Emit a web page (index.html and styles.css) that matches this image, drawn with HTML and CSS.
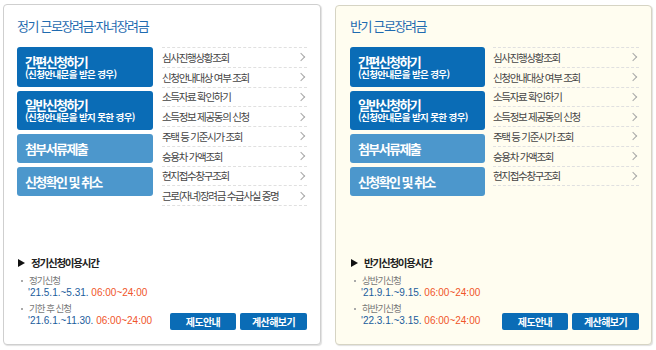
FILE: index.html
```html
<!DOCTYPE html>
<html lang="ko">
  <head>
    <meta charset="UTF-8" />
    <title>근로장려금 신청</title>
    <link rel="stylesheet" href="styles.css">
  </head>
  <body>
    <div class="wrap">
      <section class="panel">
        <h2 class="panel-title">정기 근로장려금·자녀장려금</h2>
        <div class="panel-body">
          <div class="apply-btns">
            <a href="#" class="apply-btn dark tall">
              <strong>간편신청하기</strong>
              <span>(신청안내문을 받은 경우)</span>
            </a>
            <a href="#" class="apply-btn dark tall">
              <strong>일반신청하기</strong>
              <span>(신청안내문을 받지 못한 경우)</span>
            </a>
            <a href="#" class="apply-btn light"><strong>첨부서류제출</strong></a>
            <a href="#" class="apply-btn light"><strong>신청확인 및 취소</strong></a>
          </div>
          <ul class="link-list">
            <li><a href="#">심사진행상황조회</a></li>
            <li><a href="#">신청안내대상 여부 조회</a></li>
            <li><a href="#">소득자료 확인하기</a></li>
            <li><a href="#">소득정보 제공동의 신청</a></li>
            <li><a href="#">주택 등 기준시가 조회</a></li>
            <li><a href="#">승용차 가액조회</a></li>
            <li><a href="#">현지접수창구조회</a></li>
            <li><a href="#">근로(자녀)장려금 수급사실 증명</a></li>
          </ul>
        </div>
        <div class="info">
          <div class="info-text">
            <h3 class="info-title">정기신청이용시간</h3>
            <dl class="info-item">
              <dt>정기신청</dt>
              <dd>'21.5.1.~5.31. <em>06:00~24:00</em></dd>
            </dl>
            <dl class="info-item">
              <dt>기한 후 신청</dt>
              <dd>'21.6.1.~11.30. <em>06:00~24:00</em></dd>
            </dl>
          </div>
          <div class="info-btns">
            <a href="#" class="small-btn">제도안내</a>
            <a href="#" class="small-btn">계산해보기</a>
          </div>
        </div>
      </section>

      <section class="panel panel-half">
        <h2 class="panel-title">반기 근로장려금</h2>
        <div class="panel-body">
          <div class="apply-btns">
            <a href="#" class="apply-btn dark tall">
              <strong>간편신청하기</strong>
              <span>(신청안내문을 받은 경우)</span>
            </a>
            <a href="#" class="apply-btn dark tall">
              <strong>일반신청하기</strong>
              <span>(신청안내문을 받지 못한 경우)</span>
            </a>
            <a href="#" class="apply-btn light"><strong>첨부서류제출</strong></a>
            <a href="#" class="apply-btn light"><strong>신청확인 및 취소</strong></a>
          </div>
          <ul class="link-list">
            <li><a href="#">심사진행상황조회</a></li>
            <li><a href="#">신청안내대상 여부 조회</a></li>
            <li><a href="#">소득자료 확인하기</a></li>
            <li><a href="#">소득정보 제공동의 신청</a></li>
            <li><a href="#">주택 등 기준시가 조회</a></li>
            <li><a href="#">승용차 가액조회</a></li>
            <li><a href="#">현지접수창구조회</a></li>
          </ul>
        </div>
        <div class="info">
          <div class="info-text">
            <h3 class="info-title">반기신청이용시간</h3>
            <dl class="info-item">
              <dt>상반기신청</dt>
              <dd>'21.9.1.~9.15. <em>06:00~24:00</em></dd>
            </dl>
            <dl class="info-item">
              <dt>하반기신청</dt>
              <dd>'22.3.1.~3.15. <em>06:00~24:00</em></dd>
            </dl>
          </div>
          <div class="info-btns">
            <a href="#" class="small-btn">제도안내</a>
            <a href="#" class="small-btn">계산해보기</a>
          </div>
        </div>
      </section>
    </div>
  </body>
</html>
```

FILE: styles.css
```css
* {
  margin: 0;
  padding: 0;
  box-sizing: border-box;
}

:root {
  --blue-dark: #0a6cb6;
  --blue-light: #4c97cc;
  --title-blue: #1f6bb0;
  --date-blue: #1b5c9c;
  --time-red: #f0552a;
  --text-color: #444;
}

body {
  font-family: "Noto Sans CJK KR", "Noto Sans", sans-serif;
  background: #fff;
  color: var(--text-color);
}

a {
  text-decoration: none;
  color: inherit;
}

ul {
  list-style: none;
}

.wrap {
  display: flex;
  gap: 14px;
  padding: 4px 3px;
}

.panel {
  width: 318px;
  height: 341px;
  border: 1px solid #cfcfcf;
  border-radius: 4px;
  background: #fff;
  box-shadow: 1px 1px 1px rgba(0, 0, 0, 0.12);
  padding: 12px 13px 14px 13px;
  display: flex;
  flex-direction: column;
}

.panel-half {
  width: 317px;
  margin-top: 1px;
  height: 340px;
  background: #fffdf0;
  border-color: #d6d4c4;
  padding: 11px 12px 14px 14px;
}

.panel-title {
  font-size: 13px;
  font-weight: 400;
  line-height: 18px;
  letter-spacing: -1.4px;
  color: var(--title-blue);
  margin-bottom: 12px;
}

.panel-body {
  display: grid;
  grid-template-columns: 136px 1fr;
  gap: 9px;
}

.panel-half .panel-body {
  grid-template-columns: 135px 1fr;
  gap: 8px;
}

.apply-btns {
  display: flex;
  flex-direction: column;
  gap: 4px;
}

.apply-btn {
  display: flex;
  flex-direction: column;
  justify-content: center;
  height: 29px;
  padding: 0 8px;
  border-radius: 3px;
  color: #fff;
}

.apply-btn.tall {
  height: 40px;
}

.apply-btn.tall + .apply-btn.tall {
  height: 39px;
}

.apply-btn.dark {
  background: var(--blue-dark);
}

.apply-btn.light {
  background: var(--blue-light);
}

.apply-btn strong {
  font-size: 13px;
  line-height: 15px;
  letter-spacing: -1.6px;
  font-weight: 700;
}

.apply-btn.tall strong {
  line-height: 14px;
}

.apply-btn span {
  font-size: 9.5px;
  line-height: 11px;
  letter-spacing: -0.6px;
  font-weight: 700;
}

.link-list {
  border-top: 1px dashed #e0e0e0;
}

.link-list li {
  border-bottom: 1px dashed #e0e0e0;
}

.link-list a {
  display: flex;
  justify-content: space-between;
  align-items: center;
  height: 18.75px;
  font-size: 10.5px;
  letter-spacing: -1.3px;
  color: var(--text-color);
}

.link-list a::after {
  content: "";
  width: 5px;
  height: 5px;
  border-top: 1px solid #a8a8a8;
  border-right: 1px solid #a8a8a8;
  transform: rotate(45deg);
  margin-right: 3px;
}

.info {
  margin-top: auto;
  display: flex;
  justify-content: space-between;
  align-items: flex-end;
}

.info-text {
  padding-bottom: 3px;
}

.info-title {
  display: flex;
  align-items: center;
  font-size: 10.5px;
  line-height: 14px;
  letter-spacing: -1.2px;
  font-weight: 700;
  color: #222;
  margin-bottom: 4px;
}

.info-title::before {
  content: "";
  border-left: 7px solid #111;
  border-top: 4px solid transparent;
  border-bottom: 4px solid transparent;
  margin: 0 6px 0 1px;
}

.info-item + .info-item {
  margin-top: 3px;
}

.info-item dt {
  display: flex;
  align-items: center;
  font-size: 9.5px;
  line-height: 13px;
  letter-spacing: -1px;
  color: #777;
}

.info-item dt::before {
  content: "";
  width: 2px;
  height: 2px;
  background: #aaa;
  margin: 0 6px 0 4px;
}

.info-item dd {
  padding-left: 11px;
  font-family: "Liberation Sans", "Noto Sans", sans-serif;
  font-size: 10px;
  line-height: 12px;
  color: var(--date-blue);
}

.info-item em {
  font-style: normal;
  color: var(--time-red);
}

.info-btns {
  display: flex;
  gap: 4px;
}

.small-btn {
  width: 66px;
  height: 17px;
  border-radius: 2px;
  background: var(--blue-dark);
  color: #fff;
  font-size: 10px;
  line-height: 17px;
  letter-spacing: -0.6px;
  font-weight: 700;
  text-align: center;
}

.small-btn + .small-btn {
  width: 67px;
}
```
